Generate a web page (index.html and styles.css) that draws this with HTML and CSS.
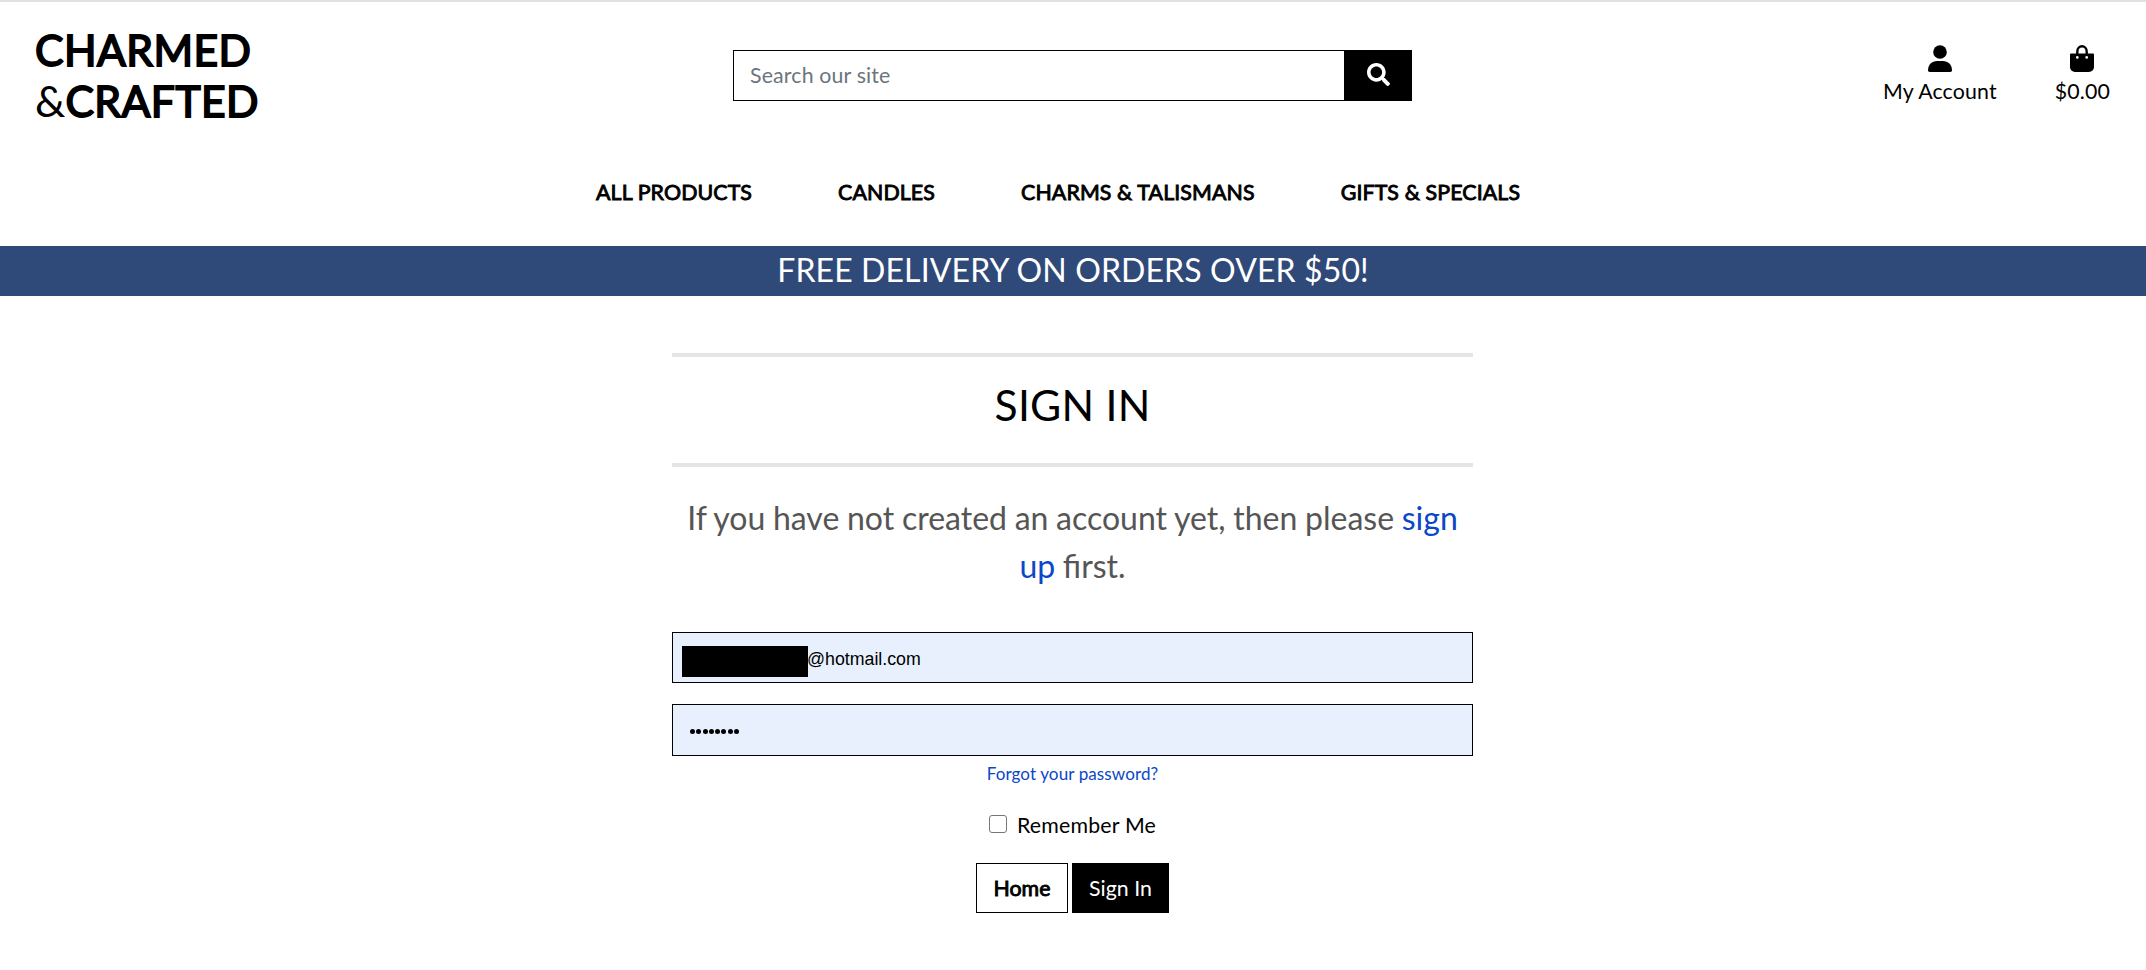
FILE: index.html
```html
<!DOCTYPE html>
<html lang="en">
<head>
<meta charset="utf-8">
<title>Charmed &amp; Crafted - Sign In</title>
<link rel="stylesheet" href="styles.css">
</head>
<body>
<header class="header">
  <a class="logo"><span class="strong">CHARMED</span><br><span class="amp">&amp;</span><span class="strong">CRAFTED</span></a>
  <form class="search">
    <input class="search-input" type="text" placeholder="Search our site">
    <button class="search-button" type="button" aria-label="Search">
      <svg width="23" height="23" viewBox="0 0 512 512" fill="currentColor"><path d="M505 442.700 405.300 343c-4.500-4.500-10.600-7-17-7H372c27.600-35.300 44-79.700 44-128C416 93.100 322.900 0 208 0S0 93.100 0 208s93.100 208 208 208c48.300 0 92.700-16.400 128-44v16.300c0 6.400 2.500 12.500 7 17l99.700 99.700c9.400 9.400 24.600 9.400 33.900 0l28.300-28.300c9.400-9.400 9.400-24.600.1-34zM208 336c-70.700 0-128-57.200-128-128 0-70.700 57.200-128 128-128 70.700 0 128 57.200 128 128 0 70.700-57.200 128-128 128z"/></svg>
    </button>
  </form>
  <div class="tools">
    <a class="tool">
      <svg width="24" height="27" viewBox="0 0 24 27" fill="currentColor"><circle cx="12" cy="7" r="6.800"/><path d="M0 25.300C0 19.500 4 16 9 16h6c5 0 9 3.500 9 9.300 0 1-.7 1.700-1.700 1.700H1.700C.7 27 0 26.300 0 25.300z"/></svg>
      <span>My Account</span>
    </a>
    <a class="tool">
      <svg width="24" height="27" viewBox="0 0 24 27"><path d="M7.300 14V6.500a4.700 5.200 0 0 1 9.400 0V14" fill="none" stroke="#000" stroke-width="2.400"/><path d="M1 8.500h22a1 1 0 0 1 1 1V22a5 5 0 0 1-5 5H5a5 5 0 0 1-5-5V9.500a1 1 0 0 1 1-1z"/><g fill="#fff"><circle cx="7.300" cy="12.400" r="1.300"/><circle cx="16.700" cy="12.400" r="1.300"/></g></svg>
      <span>$0.00</span>
    </a>
  </div>
</header>
<nav class="nav">
  <a class="strong">ALL PRODUCTS</a><a class="strong">CANDLES</a><a class="strong">CHARMS &amp; TALISMANS</a><a class="strong">GIFTS &amp; SPECIALS</a>
</nav>
<div class="banner">FREE DELIVERY ON ORDERS OVER $50!</div>
<main class="main">
  <h1 class="title">SIGN IN</h1>
  <p class="lead">If you have not created an account yet, then please <a class="link">sign up</a> first.</p>
  <div class="field email"><span class="redacted"></span><span class="domain">@hotmail.com</span></div>
  <div class="field password"><i></i><i></i><i></i><i></i><i></i><i></i><i></i><i></i></div>
  <a class="link forgot">Forgot your password?</a>
  <label class="remember"><span class="check"></span><span>Remember Me</span></label>
  <div class="actions"><a class="button outline strong">Home</a><a class="button solid">Sign In</a></div>
</main>
</body>
</html>
```
FILE: styles.css
```css
* { box-sizing: border-box; }
body {
  margin: 0;
  height: 970px;
  overflow: hidden;
  border-top: 2px solid #e1e1e1;
  background: #fff;
  color: #000;
  font: 400 21.333px/32px Lato, sans-serif;
}
.strong { -webkit-text-stroke: 0.9px currentColor; }
.header {
  display: grid;
  grid-template-columns: 733px 679px 1fr;
  height: 158px;
}
.logo {
  padding: 22px 0 0 35px;
  font-size: 42.667px;
  line-height: 51px;
}
.logo .strong {
  -webkit-text-stroke-width: 1.8px;
  letter-spacing: 0.45px;
}
.search {
  display: flex;
  height: 51px;
  margin-top: 48px;
}
.search-input {
  flex: 1;
  min-width: 0;
  padding: 0 16px 2px;
  border: 1px solid #000;
  border-radius: 0;
  font: inherit;
  letter-spacing: 0.15px;
}
.search-input::placeholder { color: #6c757d; opacity: 1; }
.search-button {
  width: 67px;
  padding: 0;
  border: 0;
  background: #000;
  color: #fff;
}
.search-button svg { display: block; margin: -2px auto 0; }
.tools {
  display: flex;
  justify-content: flex-end;
  gap: 58px;
  padding: 43px 36px 0 0;
  letter-spacing: 0.15px;
}
.tool {
  display: flex;
  flex-direction: column;
  align-items: center;
  gap: 3px;
}
.nav {
  display: flex;
  gap: 86px;
  height: 86px;
  padding: 16px 0 0 596px;
  letter-spacing: 0.13px;
}
.nav a { white-space: nowrap; }
.banner {
  height: 50px;
  background: #2f4979;
  color: #fff;
  font-size: 32px;
  letter-spacing: 0.12px;
  line-height: 48px;
  text-align: center;
}
.main {
  display: flex;
  flex-direction: column;
  align-items: center;
  width: 801px;
  margin: 57px auto 0 672px;
}
.title {
  width: 100%;
  height: 114px;
  margin: 0;
  padding-top: 22px;
  border: solid #e5e5e5;
  border-width: 4px 0;
  font-size: 42.667px;
  font-weight: 400;
  letter-spacing: 0.25px;
  line-height: 51px;
  text-align: center;
}
.lead {
  width: 100%;
  margin: 27px 0 42px;
  color: #555;
  font-size: 32px;
  line-height: 48px;
  text-align: center;
  word-spacing: -0.5px;
}
.link { color: #0a47c9; }
.field {
  display: flex;
  align-items: center;
  width: 100%;
  height: 51px;
  border: 1px solid #000;
  background: #e8f0fe;
}
.email {
  padding-left: 9px;
  font: 17.778px/20px "Liberation Sans", Arial, sans-serif;
}
.redacted {
  width: 126px;
  height: 31px;
  margin-top: 7px;
  background: #000;
}
.domain { margin: 2px 0 0 -1px; }
.password {
  gap: 1.300px;
  height: 52px;
  margin-top: 21px;
  padding: 3px 0 0 17px;
}
.password i {
  width: 5px;
  height: 5px;
  border-radius: 50%;
  background: #000;
}
.forgot {
  margin-top: 5px;
  font-size: 17.067px;
  letter-spacing: 0.1px;
  line-height: 26px;
}
.remember {
  display: flex;
  align-items: center;
  gap: 10px;
  margin-top: 22px;
  letter-spacing: 0.18px;
}
.check {
  width: 18px;
  height: 18px;
  margin-top: -2px;
  border: 1px solid #767676;
  border-radius: 3px;
}
.actions { display: flex; gap: 4px; margin-top: 22px; }
.button {
  height: 50px;
  border: 1px solid #000;
  line-height: 49px;
  text-align: center;
}
.outline { width: 92px; }
.solid { width: 97px; background: #000; color: #fff; }
```
